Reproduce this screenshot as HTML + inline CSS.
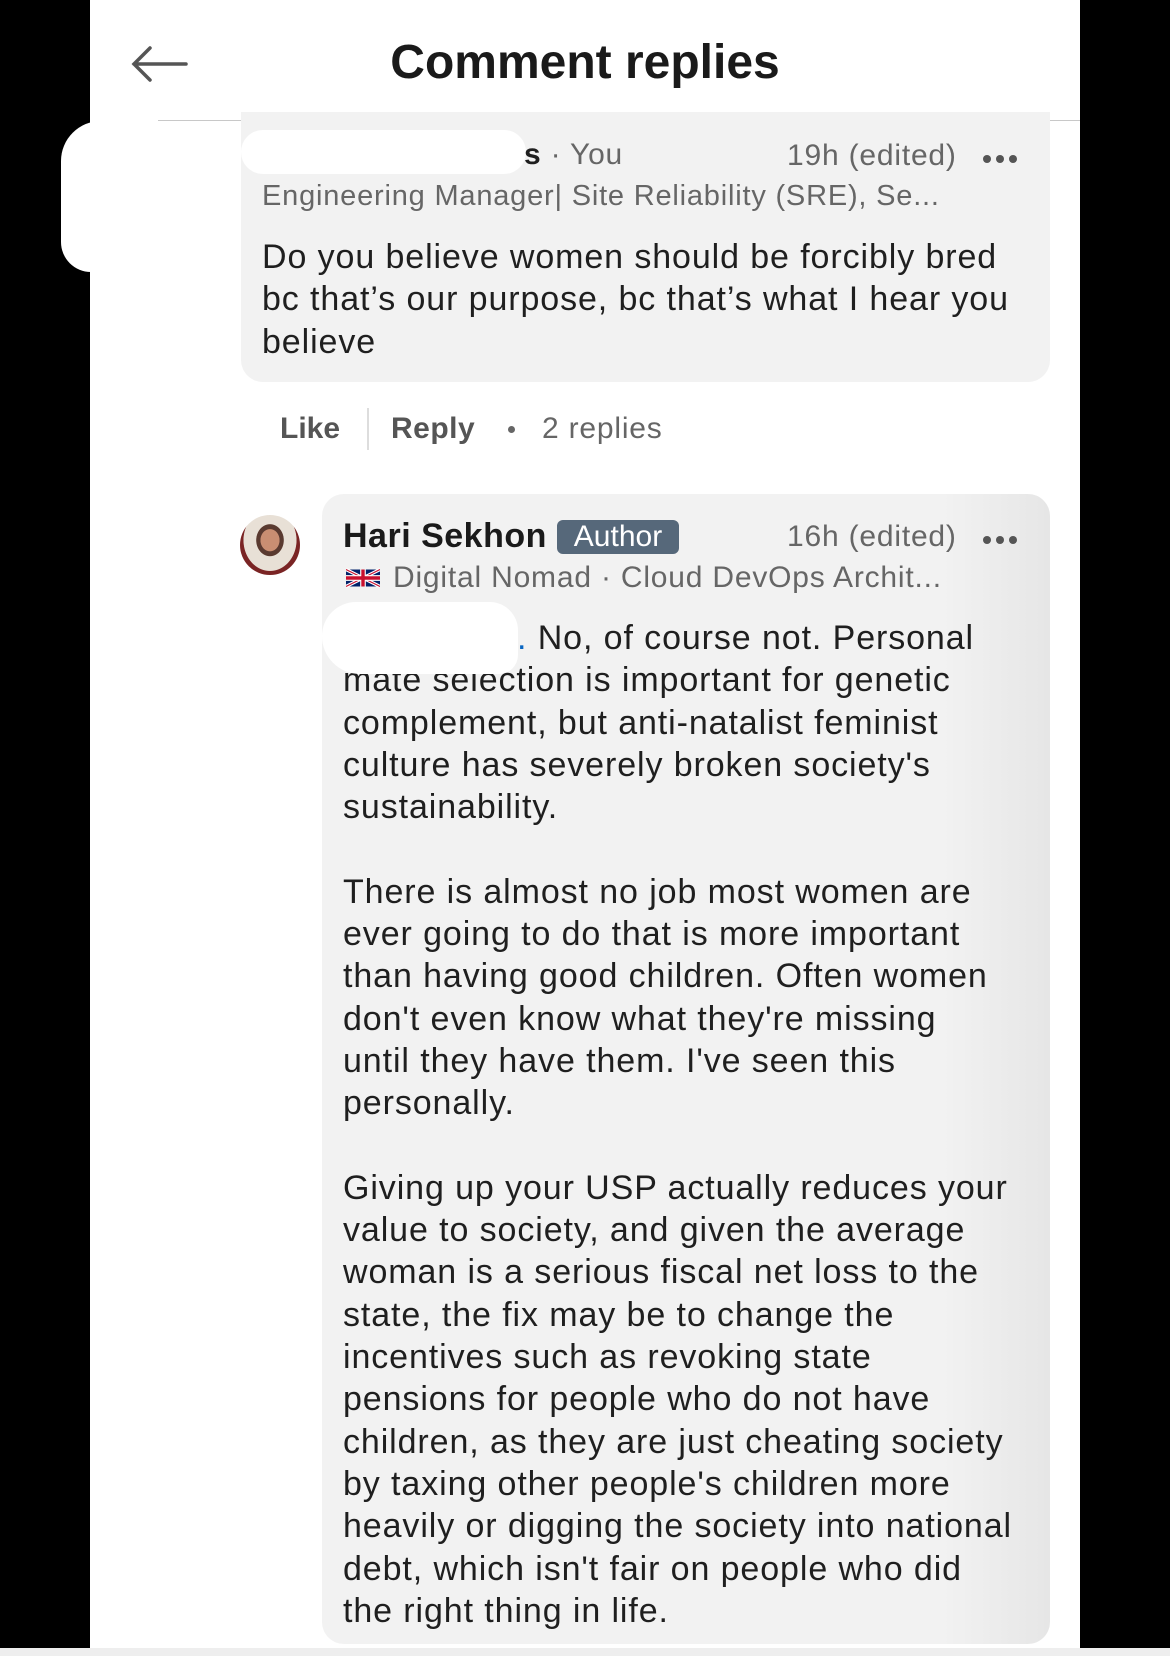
<!DOCTYPE html>
<html><head><meta charset="utf-8"><style>
*{margin:0;padding:0;box-sizing:border-box}
body{width:1170px;height:1656px;background:#000;position:relative;overflow:hidden;font-family:"Liberation Sans",sans-serif;color:#1f1f1f}
.panel{position:absolute;left:90px;top:0;width:990px;height:1648px;background:#fff}
.a{position:absolute;white-space:nowrap}
.bub{position:absolute;background:#f2f2f2;border-radius:22px}
.body{font-size:34px;line-height:42.3px;color:#1f1f1f;letter-spacing:0.9px}
.meta{font-size:30px;color:#666;letter-spacing:0.8px}
.dots{position:absolute;width:36px;height:8px}
.dots i{position:absolute;top:0;width:8px;height:8px;border-radius:50%;background:#555}
</style></head><body>
<div class="panel"></div>
<div style="position:absolute;left:0;top:1648px;width:1170px;height:8px;background:#eee"></div>
<svg class="a" style="left:128px;top:44px" width="62" height="40" viewBox="0 0 62 40"><path d="M58 20H6M22 4L6 20l16 16" fill="none" stroke="#555" stroke-width="3.5" stroke-linecap="round"/></svg>
<div class="a" style="left:0;width:1170px;text-align:center;top:35px;font-size:48px;font-weight:bold;color:#1a1a1a">Comment replies</div>
<div class="a" style="left:158px;top:120px;width:922px;height:1px;background:#c8c8c8"></div>
<div class="bub" style="left:241px;top:112px;width:809px;height:270px;border-top-left-radius:0;border-top-right-radius:0"></div>
<div class="a" style="left:61px;top:121px;width:100px;height:151px;background:#fff;border-radius:40px 20px 10px 30px"></div>
<div class="a" style="left:241px;top:130px;width:285px;height:44px;background:#fff;border-radius:22px"></div>
<div class="a" style="left:524px;top:138px;font-size:30px;color:#1f1f1f;font-weight:bold;letter-spacing:0.8px">s <span style="font-weight:normal;color:#666">· You</span></div>
<div class="a meta" style="left:787px;top:139px">19h (edited)</div>
<div class="dots" style="left:983px;top:155px"><i style="left:0"></i><i style="left:13px"></i><i style="left:26px"></i></div>
<div class="a meta" style="left:262px;top:180px;font-size:29px">Engineering Manager| Site Reliability (SRE), Se...</div>
<div class="a body" style="left:262px;top:236px">Do you believe women should be forcibly bred<br>bc that’s our purpose, bc that’s what I hear you<br>believe</div>
<div class="a" style="left:280px;top:412px;font-size:30px;font-weight:bold;color:#555">Like</div>
<div class="a" style="left:367px;top:408px;width:2px;height:42px;background:#ddd"></div>
<div class="a" style="left:391px;top:412px;font-size:30px;font-weight:bold;color:#555;letter-spacing:0.5px">Reply</div>
<div class="a" style="left:508px;top:426px;width:7px;height:7px;border-radius:50%;background:#666"></div>
<div class="a" style="left:542px;top:412px;font-size:30px;color:#666;letter-spacing:0.8px">2 replies</div>
<div class="bub" style="left:322px;top:494px;width:728px;height:1150px;background:linear-gradient(90deg,#f2f2f2 85%,#e6e6e6 100%)"></div>
<div class="a" style="left:240px;top:515px;width:60px;height:60px;border-radius:50%;background:radial-gradient(ellipse at 50% 42%,#c98e72 0 22%,#5a3a30 23% 32%,#e8e0d6 33% 62%,#7a2424 63%)"></div>
<div class="a" style="left:343px;top:517px;font-size:34px;font-weight:bold;color:#1a1a1a;letter-spacing:0.5px">Hari Sekhon</div>
<div class="a" style="left:557px;top:520px;width:122px;height:34px;background:#56687a;border-radius:6px;color:#fff;font-size:30px;text-align:center;line-height:34px">Author</div>
<div class="a meta" style="left:787px;top:520px">16h (edited)</div>
<div class="dots" style="left:983px;top:536px"><i style="left:0"></i><i style="left:13px"></i><i style="left:26px"></i></div>
<svg class="a" style="left:346px;top:567px" width="34" height="22" viewBox="0 0 60 30"><rect width="60" height="30" fill="#012169"/><path d="M0 0L60 30M60 0L0 30" stroke="#fff" stroke-width="6"/><path d="M0 0L60 30M60 0L0 30" stroke="#C8102E" stroke-width="2"/><path d="M30 0V30M0 15H60" stroke="#fff" stroke-width="10"/><path d="M30 0V30M0 15H60" stroke="#C8102E" stroke-width="6"/></svg>
<div class="a meta" style="left:393px;top:561px">Digital Nomad · Cloud DevOps Archit...</div>
<div class="a body" style="left:343px;top:617px"><span style="display:inline-block;width:174px"></span><span style="color:#0a66c2">.</span> No, of course not. Personal<br>mate selection is important for genetic<br>complement, but anti-natalist feminist<br>culture has severely broken society's<br>sustainability.<br><br>There is almost no job most women are<br>ever going to do that is more important<br>than having good children. Often women<br>don't even know what they're missing<br>until they have them. I've seen this<br>personally.<br><br>Giving up your USP actually reduces your<br>value to society, and given the average<br>woman is a serious fiscal net loss to the<br>state, the fix may be to change the<br>incentives such as revoking state<br>pensions for people who do not have<br>children, as they are just cheating society<br>by taxing other people's children more<br>heavily or digging the society into national<br>debt, which isn't fair on people who did<br>the right thing in life.</div>
<div class="a" style="left:322px;top:602px;width:196px;height:72px;background:#fff;border-radius:36px 30px 20px 40px"></div>
</body></html>
